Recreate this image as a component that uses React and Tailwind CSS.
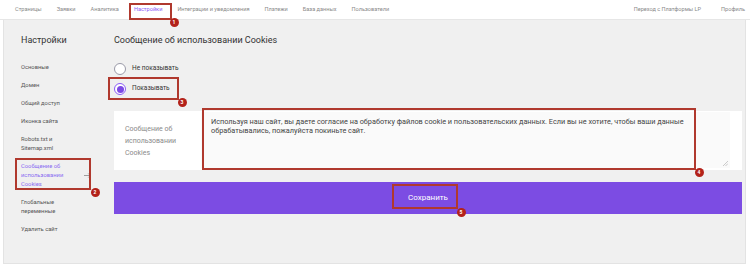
const navLeft = [
  "Страницы",
  "Заявки",
  "Аналитика",
  "Настройки",
  "Интеграции и уведомления",
  "Платежи",
  "База данных",
  "Пользователи",
];

const sideItems = [
  ["Основные"],
  ["Домен"],
  ["Общий доступ"],
  ["Иконка сайта"],
  ["Robots.txt и", "Sitemap.xml"],
  ["Сообщение об", "использовании", "Cookies"],
  ["Глобальные", "переменные"],
  ["Удалить сайт"],
];

// red annotation frame + numbered marker
function Mark({ box, dot, n }) {
  return (
    <>
      <div
        className="absolute border-2 border-[#b0392e] pointer-events-none"
        style={{ left: box[0], top: box[1], width: box[2], height: box[3] }}
      />
      <div
        className="absolute w-[9px] h-[9px] rounded-full bg-[#b3221a] flex items-center justify-center text-white text-[5px] font-bold leading-none"
        style={{ left: dot[0] - 4.5, top: dot[1] - 4.5 }}
      >
        {n}
      </div>
    </>
  );
}

export default function App() {
  return (
    <div className="relative w-[750px] h-[266px] bg-white overflow-hidden font-['Roboto',sans-serif]">
      <div className="h-[20px] bg-white border-b border-[#e6e6e6] flex items-center pl-[15px] pr-[5px] text-[5.6px] text-[#8a8a8a]">
        <div className="flex gap-[15px]">
          {navLeft.map((t) => (
            <span key={t} className={t === "Настройки" ? "text-[#8b5cf6]" : ""}>
              {t}
            </span>
          ))}
        </div>
        <div className="ml-auto flex gap-[20px]">
          <span>Переход с Платформы LP</span>
          <span>Профиль</span>
        </div>
      </div>

      <div className="ml-[3px] w-[743px] h-[244px] bg-[#f0f0f0] border-x border-b border-[#e3e3e3] flex">
        <div className="w-[110px] shrink-0 pl-[17px] pt-[14px]">
          <div className="text-[9px] leading-[12px] text-[#333]">Настройки</div>
          <div className="mt-[17px] flex flex-col gap-[9px] text-[5.8px] leading-[9px] text-[#555]">
            {sideItems.map((lines, i) =>
              i === 5 ? (
                <div key={i} className="flex items-center text-[#8b6cf0] pr-[23px]">
                  <div>
                    {lines.map((l) => (
                      <div key={l}>{l}</div>
                    ))}
                  </div>
                  <svg className="ml-auto" width="7" height="5" viewBox="0 0 7 5" fill="none">
                    <path d="M0 2.5H6.3M4.3 0.5L6.3 2.5L4.3 4.5" stroke="#7a7a7a" strokeWidth="0.7" />
                  </svg>
                </div>
              ) : (
                <div key={i}>
                  {lines.map((l) => (
                    <div key={l}>{l}</div>
                  ))}
                </div>
              )
            )}
          </div>
        </div>

        <div className="flex-1 pt-[14px] pr-[4px]">
          <div className="text-[9px] leading-[12px] text-[#333]">Сообщение об использовании Cookies</div>
          <div className="mt-[17px] flex flex-col gap-[8px] text-[6.5px] text-[#333]">
            <label className="flex items-center gap-[6px]">
              <span className="w-[12px] h-[12px] rounded-full border border-[#9a9aa8] bg-white" />
              Не показывать
            </label>
            <label className="flex items-center gap-[6px]">
              <span className="w-[12px] h-[12px] rounded-full border border-[#8b5cf6] bg-white flex items-center justify-center">
                <span className="w-[7px] h-[7px] rounded-full bg-[#7c4ae4]" />
              </span>
              Показывать
            </label>
          </div>

          <div className="mt-[16px] h-[59px] bg-white flex pt-[1px]">
            <div className="w-[87px] shrink-0 pl-[11px] pt-[11px] text-[7px] leading-[12px] text-[#8a8a8a]">
              <div>Сообщение об</div>
              <div>использовании</div>
              <div>Cookies</div>
            </div>
            <div className="relative w-[529px] h-[56px] bg-[#fafafa] pl-[10px] pt-[5px] text-[7.3px] leading-[9px] text-[#444]">
              <div>
                Используя наш сайт, вы даете согласие на обработку файлов cookie и пользовательских данных. Если вы не хотите, чтобы ваши данные
              </div>
              <div>обрабатывались, пожалуйста покиньте сайт.</div>
              <svg className="absolute right-[2px] bottom-[2px]" width="5" height="5" viewBox="0 0 5 5">
                <path d="M5 0L0 5M5 2.5L2.5 5" stroke="#aaa" strokeWidth="0.6" />
              </svg>
            </div>
          </div>

          <button className="mt-[12px] w-[628px] h-[32px] bg-[#7c4ce3] text-white text-[8px] flex items-center justify-center">
            Сохранить
          </button>
        </div>
      </div>

      <Mark box={[129, 3, 43, 17]} dot={[174, 22]} n="1" />
      <Mark box={[15, 158, 76, 32]} dot={[95, 192]} n="2" />
      <Mark box={[108, 77, 71, 23]} dot={[182, 102]} n="3" />
      <Mark box={[202, 108, 494, 62]} dot={[699, 172]} n="4" />
      <Mark box={[392, 184, 66, 25]} dot={[461, 212]} n="5" />
    </div>
  );
}
